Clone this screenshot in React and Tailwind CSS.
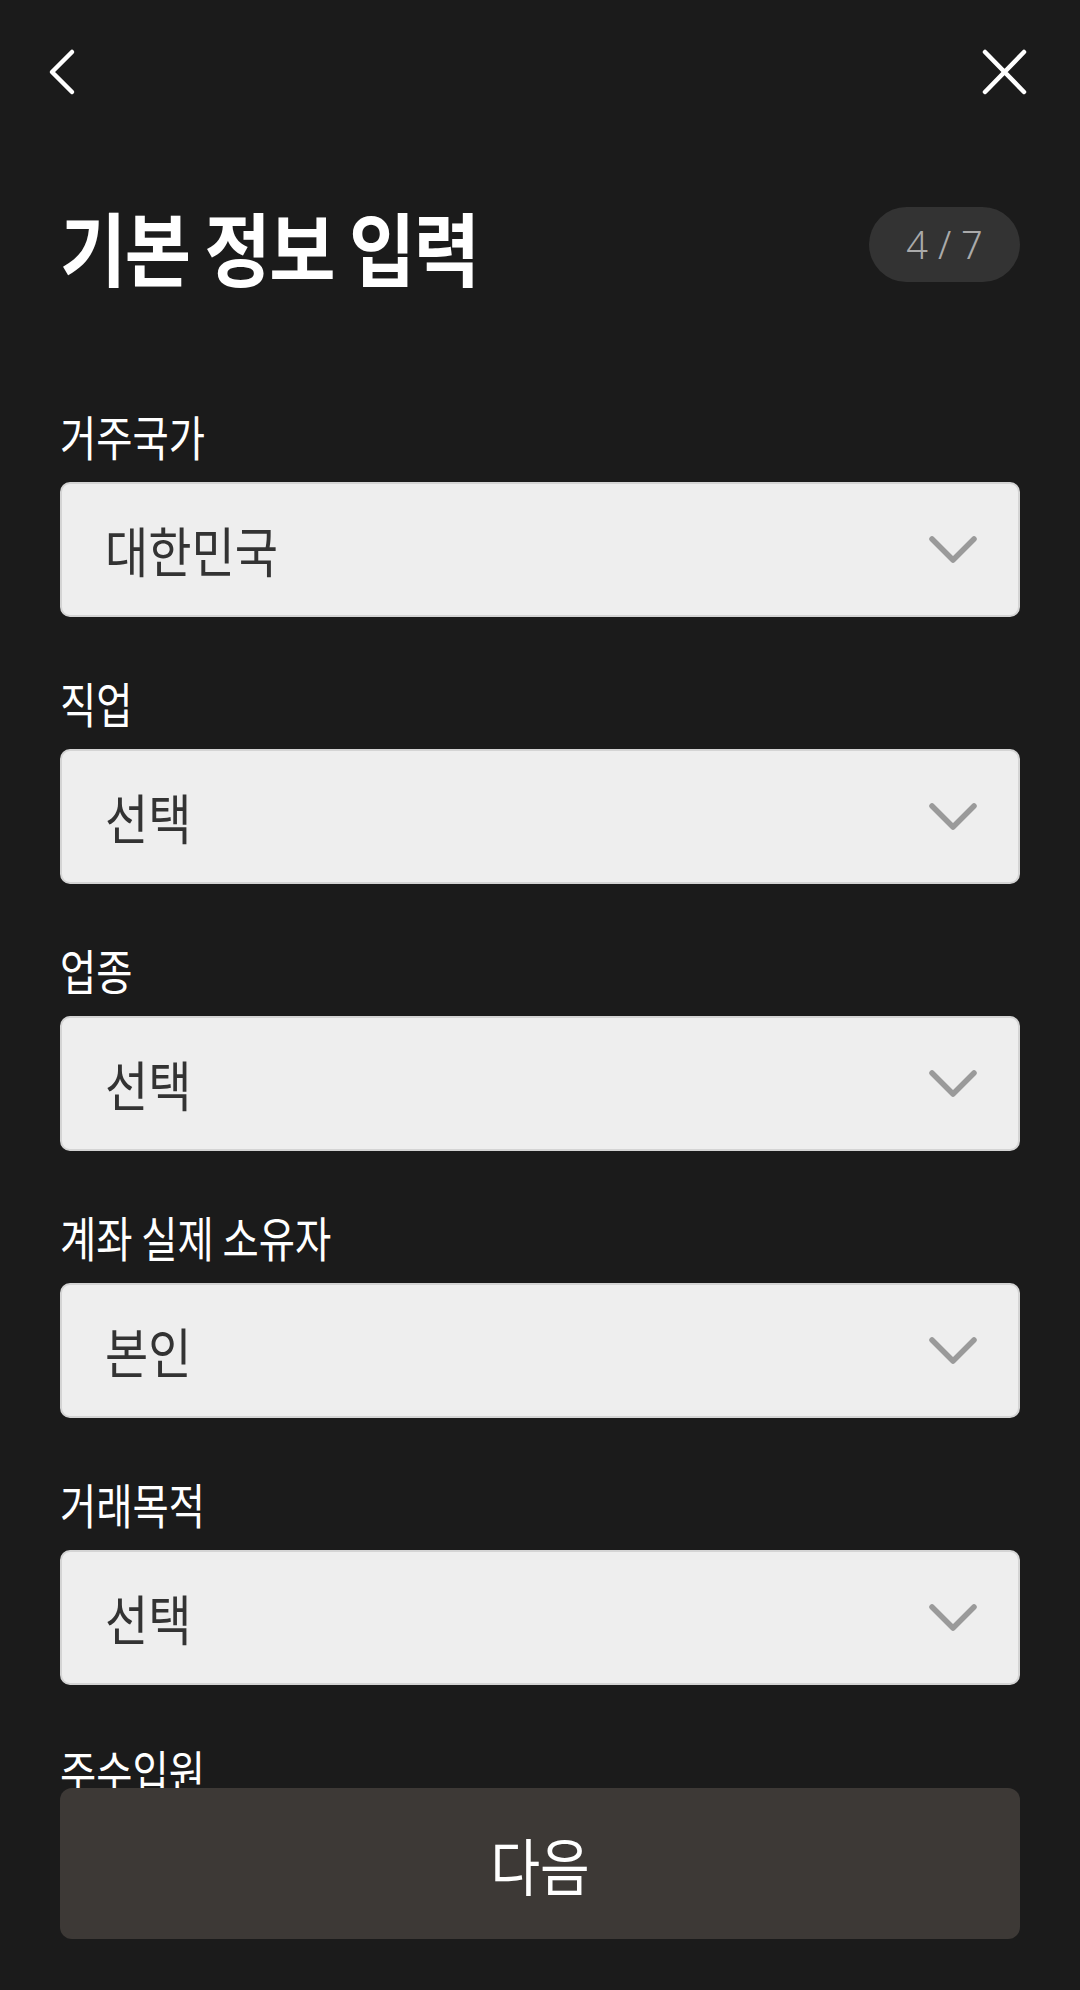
const fields = [
  { label: "거주국가", value: "대한민국" },
  { label: "직업", value: "선택" },
  { label: "업종", value: "선택" },
  { label: "계좌 실제 소유자", value: "본인" },
  { label: "거래목적", value: "선택" },
  { label: "주수입원", value: "선택" },
];

const kr = { fontFamily: '"Noto Sans CJK KR", "Noto Sans", sans-serif' };

const Chevron = () => (
  <svg width="50" height="30" viewBox="0 0 50 30" fill="none">
    <path d="M4 4 L25 25 L46 4" stroke="#9a9a9a" strokeWidth="5.5" strokeLinecap="round" strokeLinejoin="round" />
  </svg>
);

const SelectField = ({ label, value }) => (
  <div className="flex flex-col">
    <div className="h-[58px] flex items-end">
      <span className="inline-block origin-left scale-x-[0.82] whitespace-nowrap text-[48px] leading-none text-white">
        {label}
      </span>
    </div>
    <div className="mt-[23px] h-[135px] rounded-[10px] border-2 border-[#d4d4d4] bg-[#eeeeee] flex items-center justify-between pl-[43px] pr-[40px]">
      <span className="inline-block origin-left scale-x-[0.87] whitespace-nowrap text-[54px] leading-none text-[#333333]">
        {value}
      </span>
      <Chevron />
    </div>
  </div>
);

export default function App() {
  return (
    <div className="w-[1080px] h-[1990px] bg-[#1b1b1b] flex flex-col overflow-hidden" style={kr}>
      <div className="flex-1 overflow-hidden px-[60px]">
        <div className="h-[144px] flex items-center justify-between -ml-[18px] -mr-[9px]">
          <svg width="44" height="50" viewBox="0 0 44 50" fill="none">
            <path d="M30 5 L10 25 L30 45" stroke="white" strokeWidth="4.5" strokeLinecap="round" strokeLinejoin="round" />
          </svg>
          <svg width="50" height="50" viewBox="0 0 50 50" fill="none">
            <path d="M6 5 L45 45 M45 5 L6 45" stroke="white" strokeWidth="4.5" strokeLinecap="round" />
          </svg>
        </div>
        <div className="mt-[63px] flex items-center justify-between h-[75px]">
          <h1 className="inline-block origin-left scale-x-[0.9] whitespace-nowrap text-[80px] font-bold leading-none tracking-[-0.02em] text-white">
            기본 정보 입력
          </h1>
          <div className="w-[151px] h-[75px] rounded-full bg-[#333333] flex items-center justify-center text-[38px] font-light text-[#aaaaaa]" style={{ fontFamily: '"Noto Sans", sans-serif' }}>
            4 / 7
          </div>
        </div>
        <div className="mt-[119px] flex flex-col gap-[51px]">
          {fields.map((f) => (
            <SelectField key={f.label} {...f} />
          ))}
        </div>
      </div>
      <div className="px-[60px] pb-[51px]">
        <button className="w-full h-[151px] rounded-[12px] bg-[#3d3936] flex items-center justify-center">
          <span className="inline-block scale-x-[0.87] text-[62px] leading-none text-white">다음</span>
        </button>
      </div>
    </div>
  );
}
